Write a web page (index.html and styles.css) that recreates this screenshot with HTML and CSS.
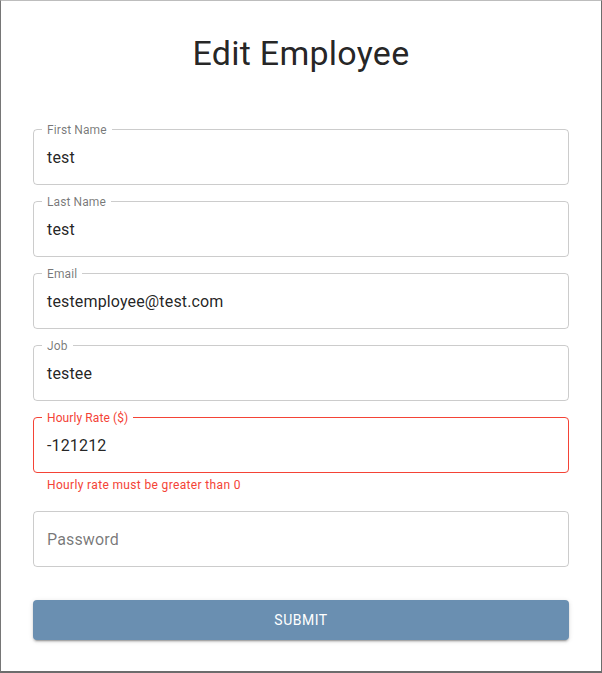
FILE: index.html
```html
<!DOCTYPE html>
<html lang="en">
<head>
<meta charset="utf-8">
<title>Edit Employee</title>
<link rel="stylesheet" href="styles.css">
</head>
<body>
<div class="frame">
  <h1 class="title">Edit Employee</h1>
  <form class="form">
    <div class="field">
      <span class="label">First Name</span>
      <div class="value">test</div>
    </div>
    <div class="field">
      <span class="label">Last Name</span>
      <div class="value">test</div>
    </div>
    <div class="field">
      <span class="label">Email</span>
      <div class="value">testemployee@test.com</div>
    </div>
    <div class="field">
      <span class="label">Job</span>
      <div class="value">testee</div>
    </div>
    <div class="group">
      <div class="field error">
        <span class="label">Hourly Rate ($)</span>
        <div class="value">-121212</div>
      </div>
      <div class="helper">Hourly rate must be greater than 0</div>
    </div>
    <div class="field">
      <div class="value placeholder">Password</div>
    </div>
    <button type="button" class="submit">Submit</button>
  </form>
</div>
</body>
</html>
```
FILE: styles.css
```css
html, body {
  margin: 0;
  padding: 0;
  background: #fff;
}
.frame {
  box-sizing: border-box;
  width: 602px;
  height: 673px;
  border-top: 1px solid #bdbdbd;
  border-left: 1px solid #767676;
  border-right: 1px solid #6c6c6c;
  border-bottom: 2px solid #6c6c6c;
  padding: 31px 32px 0 32px;
  font-family: Roboto, "Helvetica Neue", Arial, sans-serif;
}
.title {
  margin: 0;
  font-size: 34px;
  font-weight: 400;
  line-height: 42px;
  text-align: center;
  color: rgba(0, 0, 0, 0.87);
  letter-spacing: 0.25px;
}
.form {
  margin-top: 55px;
  display: flex;
  flex-direction: column;
  gap: 16px;
}
.group {
  display: flex;
  flex-direction: column;
}
.field {
  position: relative;
  box-sizing: border-box;
  height: 56px;
  border: 1px solid rgba(0, 0, 0, 0.2);
  border-radius: 4px;
  padding: 0 13px;
  display: flex;
  align-items: center;
}
.label {
  position: absolute;
  top: -7px;
  left: 8px;
  padding: 0 5px;
  background: #fff;
  font-size: 12px;
  line-height: 14px;
  color: rgba(0, 0, 0, 0.54);
  letter-spacing: 0.1px;
}
.value {
  font-size: 16px;
  line-height: 19px;
  color: rgba(0, 0, 0, 0.87);
  letter-spacing: 0.15px;
}
.placeholder {
  color: rgba(0, 0, 0, 0.54);
}
.field.error {
  border-color: #f44336;
}
.field.error .label {
  color: #f44336;
}
.helper {
  margin: 3px 14px 0;
  font-size: 12px;
  line-height: 19px;
  color: #f44336;
  letter-spacing: 0.35px;
}
.submit {
  margin-top: 17px;
  height: 40px;
  border: none;
  border-radius: 4px;
  background: #6a8fb1;
  color: #fff;
  font-family: Roboto, "Helvetica Neue", Arial, sans-serif;
  font-size: 14px;
  font-weight: 400;
  letter-spacing: 0.5px;
  text-transform: uppercase;
  box-shadow: 0 3px 1px -2px rgba(0, 0, 0, 0.2), 0 2px 2px 0 rgba(0, 0, 0, 0.14), 0 1px 5px 0 rgba(0, 0, 0, 0.12);
  cursor: pointer;
}
```
